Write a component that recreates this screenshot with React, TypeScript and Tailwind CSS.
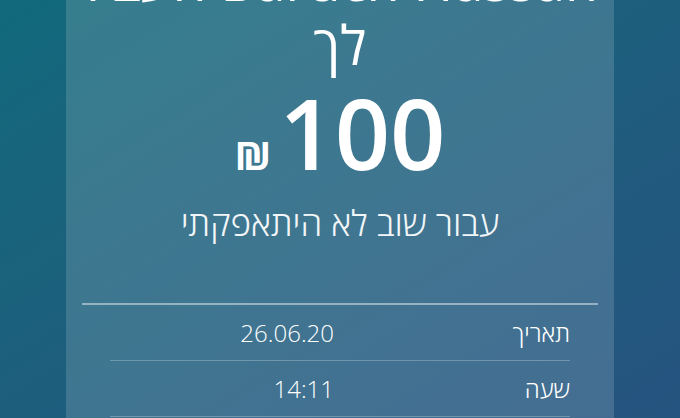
export default function App() {
  const rows = [
    { label: "תאריך", value: "26.06.20" },
    { label: "שעה", value: "14:11" },
  ];

  return (
    <main
      dir="rtl"
      className="h-[418px] w-full overflow-hidden bg-gradient-to-br from-[#11697b] to-[#25537f] text-white"
      style={{ fontFamily: '"Open Sans", "Liberation Sans", sans-serif' }}
    >
      <div className="mx-auto flex h-full w-[548px] flex-col bg-white/15 px-4">
        <div className="-mt-[48px]">
          <h1 className="text-center text-[54px] leading-[57px] font-normal whitespace-nowrap">
            <span className="block">Baruch Hassan העביר</span>
            <span className="mt-[7px] block">לך</span>
          </h1>

          <div dir="ltr" className="mt-[11px] flex items-baseline justify-center gap-2">
            <span className="text-[40px] font-bold leading-none">₪</span>
            <span className="text-[97px] font-semibold leading-none">100</span>
          </div>

          <p className="mt-[22px] text-center text-[35px] leading-[40px] font-light text-[#f2f6f8]">
            עבור שוב לא היתאפקתי
          </p>

          <div className="mt-[60px] h-[2px] bg-white/45" />

          <div className="px-7">
            {rows.map((r) => (
              <div
                key={r.label}
                className="grid h-[56px] grid-cols-2 items-center border-b border-white/25 text-[24px] font-light"
              >
                <span>{r.label}</span>
                <span className="pr-[6px] text-left" dir="ltr">
                  <span className="inline-block w-full text-right">{r.value}</span>
                </span>
              </div>
            ))}
          </div>
        </div>
      </div>
    </main>
  );
}
